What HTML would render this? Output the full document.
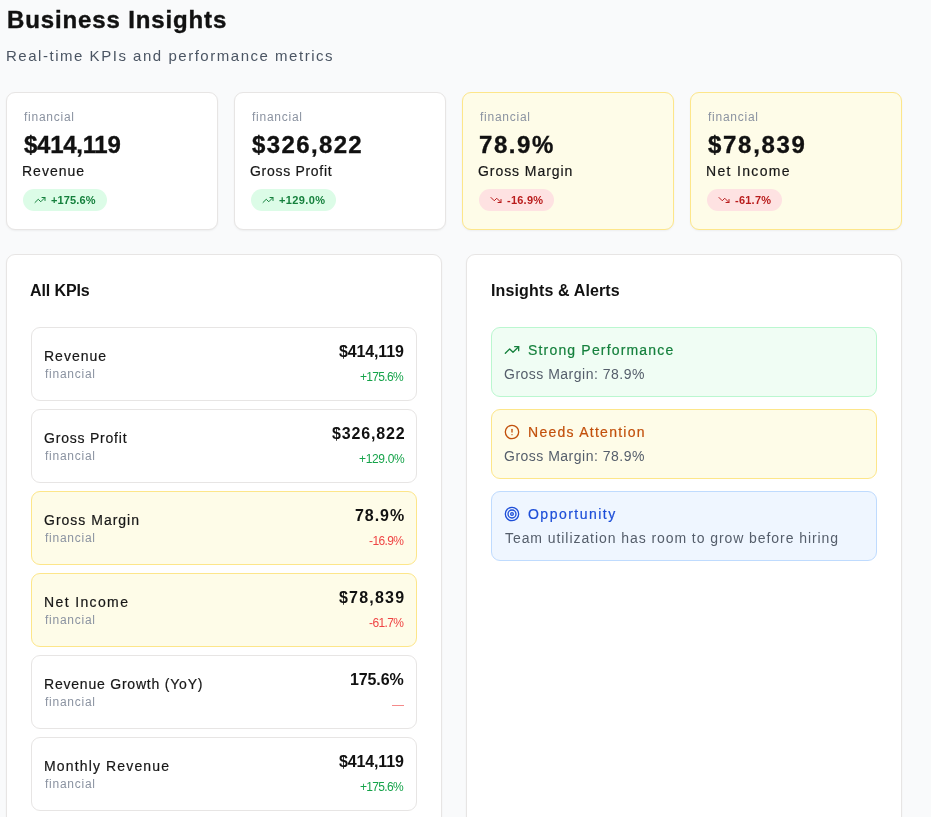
<!DOCTYPE html>
<html><head><meta charset="utf-8"><title>Business Insights</title>
<style>
html,body{margin:0;padding:0;}
body{width:931px;height:817px;overflow:hidden;background:#f9fafb;position:relative;font-family:"Liberation Sans",sans-serif;}
.t{position:absolute;white-space:nowrap;will-change:transform;}
.card{position:absolute;box-sizing:border-box;background:#fff;border:1px solid #e7e5e4;border-radius:9px;box-shadow:0 1px 2px rgba(0,0,0,0.05);}
.card.warn{background:#fefce8;border-color:#fde68a;}
.badge{position:absolute;border-radius:11px;}
.panel{position:absolute;box-sizing:border-box;background:#fff;border:1px solid #e7e5e4;border-radius:9px;box-shadow:0 1px 2px rgba(0,0,0,0.05);}
.item{position:absolute;box-sizing:border-box;background:#fff;border:1px solid #e7e5e4;border-radius:9px;}
.item.warn{background:#fefce8;border-color:#fde68a;}
.ibox{position:absolute;box-sizing:border-box;border:1px solid;border-radius:9px;}
.ic{position:absolute;}
</style></head><body>
<div class="card" style="left:6px;top:92px;width:212px;height:138px"></div>
<div class="badge" style="left:23px;top:189px;width:84px;height:22px;background:#dcfce7"></div>
<svg class="ic" style="left:34px;top:194px" width="12" height="12" viewBox="0 0 24 24" fill="none" stroke="#15803d" stroke-width="2" stroke-linecap="round" stroke-linejoin="round"><polyline points="22 7 13.5 15.5 8.5 10.5 2 17"/><polyline points="16 7 22 7 22 13"/></svg>
<div class="card" style="left:234px;top:92px;width:212px;height:138px"></div>
<div class="badge" style="left:251px;top:189px;width:84.5px;height:22px;background:#dcfce7"></div>
<svg class="ic" style="left:262px;top:194px" width="12" height="12" viewBox="0 0 24 24" fill="none" stroke="#15803d" stroke-width="2" stroke-linecap="round" stroke-linejoin="round"><polyline points="22 7 13.5 15.5 8.5 10.5 2 17"/><polyline points="16 7 22 7 22 13"/></svg>
<div class="card warn" style="left:462px;top:92px;width:212px;height:138px"></div>
<div class="badge" style="left:479px;top:189px;width:75px;height:22px;background:#fee2e2"></div>
<svg class="ic" style="left:490px;top:194px" width="12" height="12" viewBox="0 0 24 24" fill="none" stroke="#b91c1c" stroke-width="2" stroke-linecap="round" stroke-linejoin="round"><polyline points="22 17 13.5 8.5 8.5 13.5 2 7"/><polyline points="16 17 22 17 22 11"/></svg>
<div class="card warn" style="left:690px;top:92px;width:212px;height:138px"></div>
<div class="badge" style="left:707px;top:189px;width:75px;height:22px;background:#fee2e2"></div>
<svg class="ic" style="left:718px;top:194px" width="12" height="12" viewBox="0 0 24 24" fill="none" stroke="#b91c1c" stroke-width="2" stroke-linecap="round" stroke-linejoin="round"><polyline points="22 17 13.5 8.5 8.5 13.5 2 7"/><polyline points="16 17 22 17 22 11"/></svg>
<div class="panel" style="left:6px;top:254px;width:436px;height:700px"></div>
<div class="panel" style="left:466px;top:254px;width:436px;height:700px"></div>
<div class="item" style="left:31px;top:327px;width:386px;height:74px"></div>
<div class="item" style="left:31px;top:409px;width:386px;height:74px"></div>
<div class="item warn" style="left:31px;top:491px;width:386px;height:74px"></div>
<div class="item warn" style="left:31px;top:573px;width:386px;height:74px"></div>
<div class="item" style="left:31px;top:655px;width:386px;height:74px"></div>
<div style="position:absolute;left:392px;top:705px;width:12px;height:1px;background:#f58a8a"></div>
<div class="item" style="left:31px;top:737px;width:386px;height:74px"></div>
<div class="ibox" style="left:491px;top:327px;width:386px;height:70px;background:#f0fdf4;border-color:#bbf7d0"></div>
<svg class="ic" style="left:504px;top:341.5px" width="16" height="16" viewBox="0 0 24 24" fill="none" stroke="#15803d" stroke-width="2" stroke-linecap="round" stroke-linejoin="round"><polyline points="22 7 13.5 15.5 8.5 10.5 2 17"/><polyline points="16 7 22 7 22 13"/></svg>
<div class="ibox" style="left:491px;top:409px;width:386px;height:70px;background:#fefce8;border-color:#fde68a"></div>
<svg class="ic" style="left:504px;top:423.5px" width="16" height="16" viewBox="0 0 24 24" fill="none" stroke="#c2500c" stroke-width="2" stroke-linecap="round" stroke-linejoin="round"><circle cx="12" cy="12" r="10"/><line x1="12" y1="8" x2="12" y2="12"/><line x1="12" y1="16" x2="12.01" y2="16"/></svg>
<div class="ibox" style="left:491px;top:491px;width:386px;height:70px;background:#eff6ff;border-color:#bfdbfe"></div>
<svg class="ic" style="left:504px;top:505.5px" width="16" height="16" viewBox="0 0 24 24" fill="none" stroke="#1d4ed8" stroke-width="2" stroke-linecap="round" stroke-linejoin="round"><circle cx="12" cy="12" r="10"/><circle cx="12" cy="12" r="6"/><circle cx="12" cy="12" r="2"/></svg>
<div class="t" id="t0" style="left:6.98px;top:7.68px;font-size:24px;line-height:24px;font-weight:700;color:#111111;letter-spacing:0.868px;-webkit-text-stroke:0.4px #111111">Business Insights</div>
<div class="t" id="t1" style="left:6.30px;top:48.00px;font-size:15px;line-height:15px;font-weight:400;color:#4b5563;letter-spacing:1.527px">Real-time KPIs and performance metrics</div>
<div class="t" id="t2" style="left:23.54px;top:110.84px;font-size:12px;line-height:12px;font-weight:400;color:#8b93a1;letter-spacing:0.750px">financial</div>
<div class="t" id="t3" style="left:23.58px;top:133.08px;font-size:24px;line-height:24px;font-weight:700;color:#111111;letter-spacing:-0.285px;-webkit-text-stroke:0.35px #111111">$414,119</div>
<div class="t" id="t4" style="left:22.38px;top:164.15px;font-size:14px;line-height:14px;font-weight:400;color:#171717;letter-spacing:1.000px;-webkit-text-stroke:0.2px #171717">Revenue</div>
<div class="t" id="t5" style="left:50.72px;top:194.69px;font-size:11px;line-height:11px;font-weight:700;color:#15803d;letter-spacing:0.136px">+175.6%</div>
<div class="t" id="t6" style="left:251.54px;top:110.84px;font-size:12px;line-height:12px;font-weight:400;color:#8b93a1;letter-spacing:0.750px">financial</div>
<div class="t" id="t7" style="left:251.58px;top:133.08px;font-size:24px;line-height:24px;font-weight:700;color:#111111;letter-spacing:1.374px;-webkit-text-stroke:0.35px #111111">$326,822</div>
<div class="t" id="t8" style="left:250.38px;top:164.15px;font-size:14px;line-height:14px;font-weight:400;color:#171717;letter-spacing:0.705px;-webkit-text-stroke:0.2px #171717">Gross Profit</div>
<div class="t" id="t9" style="left:278.72px;top:194.69px;font-size:11px;line-height:11px;font-weight:700;color:#15803d;letter-spacing:0.364px">+129.0%</div>
<div class="t" id="t10" style="left:479.54px;top:110.84px;font-size:12px;line-height:12px;font-weight:400;color:#8b93a1;letter-spacing:0.750px">financial</div>
<div class="t" id="t11" style="left:478.58px;top:133.08px;font-size:24px;line-height:24px;font-weight:700;color:#111111;letter-spacing:1.550px;-webkit-text-stroke:0.35px #111111">78.9%</div>
<div class="t" id="t12" style="left:478.38px;top:164.15px;font-size:14px;line-height:14px;font-weight:400;color:#171717;letter-spacing:0.932px;-webkit-text-stroke:0.2px #171717">Gross Margin</div>
<div class="t" id="t13" style="left:506.72px;top:194.69px;font-size:11px;line-height:11px;font-weight:700;color:#b91c1c;letter-spacing:0.240px">-16.9%</div>
<div class="t" id="t14" style="left:707.54px;top:110.84px;font-size:12px;line-height:12px;font-weight:400;color:#8b93a1;letter-spacing:0.750px">financial</div>
<div class="t" id="t15" style="left:707.58px;top:133.08px;font-size:24px;line-height:24px;font-weight:700;color:#111111;letter-spacing:1.698px;-webkit-text-stroke:0.35px #111111">$78,839</div>
<div class="t" id="t16" style="left:706.38px;top:164.15px;font-size:14px;line-height:14px;font-weight:400;color:#171717;letter-spacing:1.333px;-webkit-text-stroke:0.2px #171717">Net Income</div>
<div class="t" id="t17" style="left:734.72px;top:194.69px;font-size:11px;line-height:11px;font-weight:700;color:#b91c1c;letter-spacing:0.240px">-61.7%</div>
<div class="t" id="t18" style="left:30.22px;top:282.56px;font-size:16px;line-height:16px;font-weight:700;color:#111111;letter-spacing:-0.109px">All KPIs</div>
<div class="t" id="t19" style="left:490.92px;top:282.56px;font-size:16px;line-height:16px;font-weight:700;color:#111111;letter-spacing:0.137px">Insights &amp; Alerts</div>
<div class="t" id="t20" style="left:43.78px;top:348.75px;font-size:14px;line-height:14px;font-weight:400;color:#171717;letter-spacing:1.000px;-webkit-text-stroke:0.2px #171717">Revenue</div>
<div class="t" id="t21" style="left:44.94px;top:367.84px;font-size:12px;line-height:12px;font-weight:400;color:#8b93a1;letter-spacing:0.748px">financial</div>
<div class="t" id="t22" style="right:526.80px;top:344.26px;font-size:16px;line-height:16px;font-weight:700;color:#111111;letter-spacing:-0.142px">$414,119</div>
<div class="t" id="t23" style="right:527.80px;top:370.74px;font-size:12px;line-height:12px;font-weight:400;color:#16a34a;letter-spacing:-0.667px">+175.6%</div>
<div class="t" id="t24" style="left:43.78px;top:430.75px;font-size:14px;line-height:14px;font-weight:400;color:#171717;letter-spacing:0.787px;-webkit-text-stroke:0.2px #171717">Gross Profit</div>
<div class="t" id="t25" style="left:44.94px;top:449.84px;font-size:12px;line-height:12px;font-weight:400;color:#8b93a1;letter-spacing:0.748px">financial</div>
<div class="t" id="t26" style="right:525.80px;top:426.26px;font-size:16px;line-height:16px;font-weight:700;color:#111111;letter-spacing:0.830px">$326,822</div>
<div class="t" id="t27" style="right:526.80px;top:452.74px;font-size:12px;line-height:12px;font-weight:400;color:#16a34a;letter-spacing:-0.333px">+129.0%</div>
<div class="t" id="t28" style="left:43.78px;top:512.75px;font-size:14px;line-height:14px;font-weight:400;color:#171717;letter-spacing:1.000px;-webkit-text-stroke:0.2px #171717">Gross Margin</div>
<div class="t" id="t29" style="left:44.94px;top:531.84px;font-size:12px;line-height:12px;font-weight:400;color:#8b93a1;letter-spacing:0.750px">financial</div>
<div class="t" id="t30" style="right:525.80px;top:508.26px;font-size:16px;line-height:16px;font-weight:700;color:#111111;letter-spacing:0.950px">78.9%</div>
<div class="t" id="t31" style="right:527.80px;top:534.74px;font-size:12px;line-height:12px;font-weight:400;color:#ef4444;letter-spacing:-0.600px">-16.9%</div>
<div class="t" id="t32" style="left:43.78px;top:594.75px;font-size:14px;line-height:14px;font-weight:400;color:#171717;letter-spacing:1.372px;-webkit-text-stroke:0.2px #171717">Net Income</div>
<div class="t" id="t33" style="left:44.94px;top:613.84px;font-size:12px;line-height:12px;font-weight:400;color:#8b93a1;letter-spacing:0.750px">financial</div>
<div class="t" id="t34" style="right:525.80px;top:590.26px;font-size:16px;line-height:16px;font-weight:700;color:#111111;letter-spacing:1.198px">$78,839</div>
<div class="t" id="t35" style="right:527.80px;top:616.74px;font-size:12px;line-height:12px;font-weight:400;color:#ef4444;letter-spacing:-0.600px">-61.7%</div>
<div class="t" id="t36" style="left:43.78px;top:676.75px;font-size:14px;line-height:14px;font-weight:400;color:#171717;letter-spacing:0.789px;-webkit-text-stroke:0.2px #171717">Revenue Growth (YoY)</div>
<div class="t" id="t37" style="left:44.94px;top:695.84px;font-size:12px;line-height:12px;font-weight:400;color:#8b93a1;letter-spacing:0.748px">financial</div>
<div class="t" id="t38" style="right:527.80px;top:672.26px;font-size:16px;line-height:16px;font-weight:700;color:#111111;letter-spacing:-0.120px">175.6%</div>
<div class="t" id="t39" style="left:43.78px;top:758.75px;font-size:14px;line-height:14px;font-weight:400;color:#171717;letter-spacing:1.143px;-webkit-text-stroke:0.2px #171717">Monthly Revenue</div>
<div class="t" id="t40" style="left:44.94px;top:777.84px;font-size:12px;line-height:12px;font-weight:400;color:#8b93a1;letter-spacing:0.748px">financial</div>
<div class="t" id="t41" style="right:526.80px;top:754.26px;font-size:16px;line-height:16px;font-weight:700;color:#111111;letter-spacing:-0.142px">$414,119</div>
<div class="t" id="t42" style="right:527.80px;top:780.74px;font-size:12px;line-height:12px;font-weight:400;color:#16a34a;letter-spacing:-0.667px">+175.6%</div>
<div class="t" id="t43" style="left:527.78px;top:343.15px;font-size:14px;line-height:14px;font-weight:400;color:#15803d;letter-spacing:1.175px;-webkit-text-stroke:0.2px #15803d">Strong Performance</div>
<div class="t" id="t44" style="left:504.08px;top:366.85px;font-size:14px;line-height:14px;font-weight:400;color:#555e6b;letter-spacing:0.492px">Gross Margin: 78.9%</div>
<div class="t" id="t45" style="left:527.78px;top:425.15px;font-size:14px;line-height:14px;font-weight:400;color:#c2500c;letter-spacing:1.267px;-webkit-text-stroke:0.2px #c2500c">Needs Attention</div>
<div class="t" id="t46" style="left:504.08px;top:448.85px;font-size:14px;line-height:14px;font-weight:400;color:#555e6b;letter-spacing:0.492px">Gross Margin: 78.9%</div>
<div class="t" id="t47" style="left:527.78px;top:507.15px;font-size:14px;line-height:14px;font-weight:400;color:#1d4ed8;letter-spacing:1.480px;-webkit-text-stroke:0.2px #1d4ed8">Opportunity</div>
<div class="t" id="t48" style="left:505.08px;top:530.85px;font-size:14px;line-height:14px;font-weight:400;color:#555e6b;letter-spacing:0.932px">Team utilization has room to grow before hiring</div>
</body></html>
